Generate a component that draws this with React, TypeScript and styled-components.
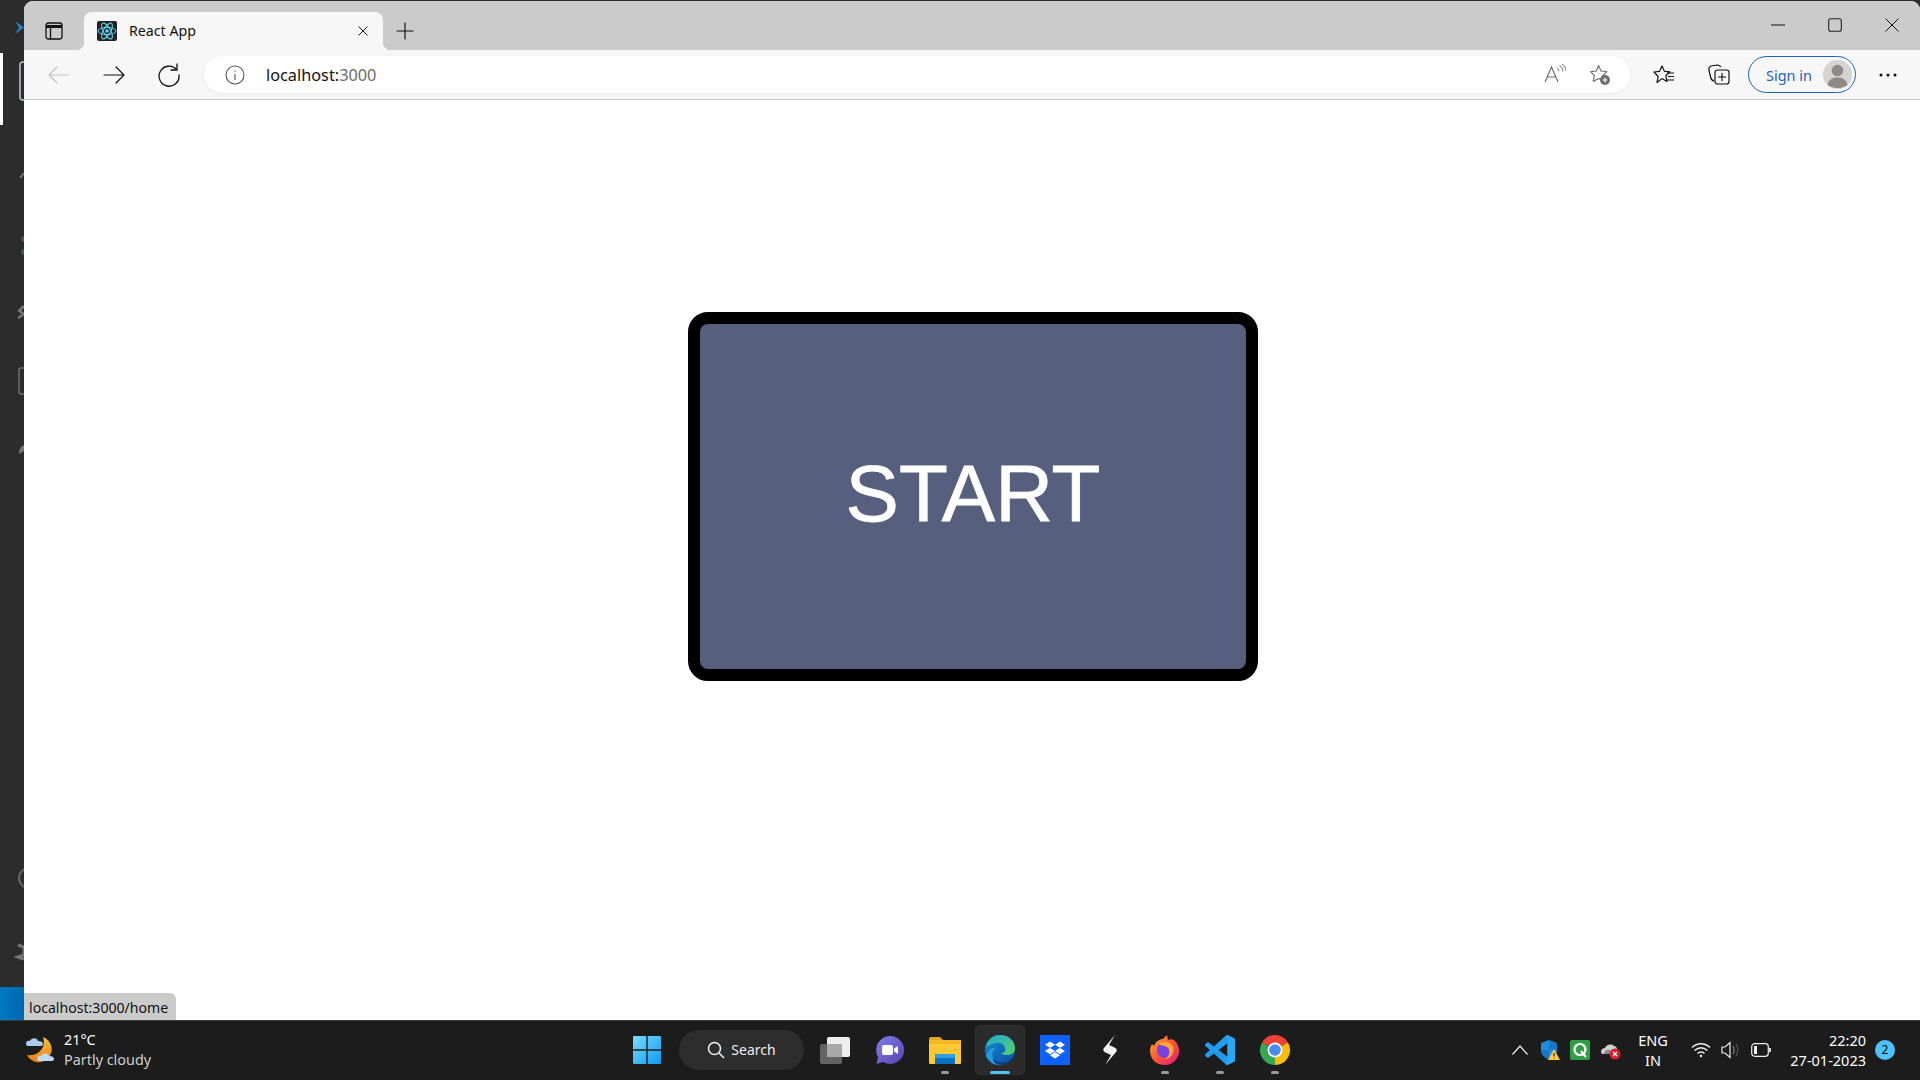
import React, { FC, ReactNode } from 'react'
import styled, { createGlobalStyle } from 'styled-components'
import { FaDropbox } from 'react-icons/fa'

// * ------------------------------------------------------------------------------- style

const GlobalStyle = createGlobalStyle`
  html, body {
    margin: 0;
    padding: 0;
    height: 100%;
    overflow: hidden;
    background: #2c2c2c;
  }
  #root {
    height: 100%;
  }
`

const Screen = styled.div`
  width: 1920px;
  height: 1080px;
  display: flex;
  flex-direction: column;
  position: relative;
  overflow: hidden;
  font-family: 'Noto Sans', 'Open Sans', sans-serif;
`

const Desktop = styled.div`
  height: 1020px;
  display: flex;
`

const ActivityBar = styled.div`
  width: 24px;
  flex: none;
  display: flex;
  flex-direction: column;
  background: #2c2c2c;
`

const ActivitySpace = styled.div`
  flex: 1;
  overflow: hidden;
`

const StatusFoot = styled.div`
  height: 33px;
  background: linear-gradient(90deg, #0078c4, #0068ad);
`

const BrowserWindow = styled.div`
  flex: 1;
  margin-top: 1px;
  display: flex;
  flex-direction: column;
  border-radius: 9px 9px 0 0;
  overflow: hidden;
  background: #fff;
`

const TitleBar = styled.div`
  height: 49px;
  flex: none;
  display: flex;
  align-items: flex-end;
  background: #cbcbcb;
`

const PanelButton = styled.div`
  width: 60px;
  height: 38px;
  display: flex;
  align-items: center;
  justify-content: center;
`

const Tab = styled.div`
  width: 299px;
  height: 38px;
  display: flex;
  align-items: center;
  position: relative;
  box-sizing: border-box;
  padding: 0 10px 0 13px;
  border-radius: 8px 8px 0 0;
  background: #f7f7f7;
  &::before,
  &::after {
    content: '';
    position: absolute;
    bottom: 0;
    width: 8px;
    height: 8px;
  }
  &::before {
    left: -8px;
    background: radial-gradient(circle at 0 0, transparent 8px, #f7f7f7 8.5px);
  }
  &::after {
    right: -8px;
    background: radial-gradient(circle at 100% 0, transparent 8px, #f7f7f7 8.5px);
  }
`

const TabTitle = styled.span`
  flex: 1;
  margin: 0 0 2px 12px;
  font-size: 14.2px;
  color: #111;
`

const NewTab = styled.div`
  width: 44px;
  height: 38px;
  display: flex;
  align-items: center;
  justify-content: center;
`

const WindowControls = styled.div`
  margin-left: auto;
  align-self: stretch;
  display: flex;
`

const WindowButton = styled.div`
  width: 57px;
  height: 48px;
  display: flex;
  align-items: center;
  justify-content: center;
`

const Toolbar = styled.div`
  height: 49px;
  flex: none;
  display: flex;
  align-items: center;
  padding-left: 7px;
  background: #f7f7f7;
  border-bottom: 1px solid #c9c9c9;
`

const ToolButton = styled.div<{ $width?: number }>`
  width: ${(p) => p.$width ?? 55}px;
  height: 37px;
  flex: none;
  display: flex;
  align-items: center;
  justify-content: center;
`

const AddressBar = styled.div`
  flex: 1;
  height: 37px;
  margin: 0 8px 0 8px;
  display: flex;
  align-items: center;
  border-radius: 19px;
  background: #fff;
  box-shadow: 0 1px 3px rgba(0, 0, 0, 0.06);
`

const InfoSlot = styled.div`
  width: 62px;
  display: flex;
  justify-content: center;
`

const UrlHost = styled.span`
  font-size: 16.3px;
  color: #111;
`

const UrlPort = styled.span`
  font-size: 16.3px;
  color: #6b6b6b;
`

const AddressActions = styled.div`
  margin-left: auto;
  display: flex;
  padding-right: 8px;
`

const AddressAction = styled.div`
  width: 45px;
  display: flex;
  justify-content: center;
`

const SignIn = styled.div`
  width: 108px;
  height: 37px;
  flex: none;
  box-sizing: border-box;
  display: flex;
  align-items: center;
  justify-content: space-between;
  padding: 0 3px 0 17px;
  border: 1px solid #1b62c4;
  border-radius: 19px;
  font-size: 14.5px;
  color: #1b62c4;
`

const Content = styled.main`
  flex: 1;
  display: flex;
  justify-content: center;
  align-items: flex-start;
  padding-top: 212px;
  background: #fff;
`

const StartButton = styled.button`
  width: 570px;
  height: 369px;
  margin: 0 0 0 2px;
  padding: 0 0 6px;
  box-sizing: border-box;
  border: 12px solid #000;
  border-radius: 20px;
  background: #565f7d;
  color: #fff;
  font-family: 'Liberation Sans', Arial, sans-serif;
  font-size: 80px;
  -webkit-text-stroke: 0.8px #fff;
  cursor: pointer;
`

const LinkHint = styled.div`
  position: absolute;
  left: 24px;
  bottom: 60px;
  height: 27px;
  box-sizing: border-box;
  padding: 2px 8px 0 5px;
  display: flex;
  align-items: center;
  border-radius: 0 6px 0 0;
  background: #cbcbcb;
  font-size: 14.1px;
  color: #111;
`

const Taskbar = styled.footer`
  height: 60px;
  flex: none;
  box-sizing: border-box;
  border-top: 1px solid #3a3a3a;
  padding-bottom: 2px;
  display: grid;
  grid-template-columns: 619px auto 1fr;
  align-items: center;
  background: #1c1c1c;
  color: #fff;
`

const Weather = styled.div`
  display: flex;
  align-items: center;
  gap: 9px;
  padding-left: 25px;
`

const WeatherText = styled.div`
  display: flex;
  flex-direction: column;
  font-size: 14.4px;
  line-height: 20px;
`

const WeatherSub = styled.span`
  color: #cfcfcf;
`

const TaskIcons = styled.div`
  display: flex;
  align-items: center;
`

const TaskButton = styled.div<{ $active?: boolean }>`
  width: ${(p) => (p.$active ? 50 : 55)}px;
  height: 50px;
  margin: ${(p) => (p.$active ? '0 2.5px' : '0')};
  position: relative;
  display: flex;
  align-items: center;
  justify-content: center;
  box-sizing: border-box;
  border-radius: 5px;
  background: ${(p) => (p.$active ? '#2b2b2b' : 'transparent')};
  border: ${(p) => (p.$active ? '1px solid #333' : 'none')};
`

const RunDot = styled.span<{ $active?: boolean }>`
  position: absolute;
  bottom: ${(p) => (p.$active ? 0 : 1)}px;
  left: 50%;
  width: ${(p) => (p.$active ? 20 : 8)}px;
  height: 3px;
  transform: translateX(-50%);
  border-radius: 2px;
  background: ${(p) => (p.$active ? '#4cc2ff' : '#9a9a9a')};
`

const SearchPill = styled.div`
  width: 125px;
  height: 40px;
  margin: 0 3px 0 5px;
  display: flex;
  align-items: center;
  justify-content: center;
  gap: 6px;
  border-radius: 20px;
  background: #2d2d2d;
  font-size: 14px;
  color: #eee;
`

const Tray = styled.div`
  display: flex;
  align-items: center;
  justify-content: flex-end;
  padding-right: 40px;
`

const TrayIcon = styled.div<{ $width?: number }>`
  width: ${(p) => p.$width ?? 30}px;
  display: flex;
  justify-content: center;
`

const Lang = styled.div`
  width: 56px;
  margin: 0 5px 0 0;
  text-align: center;
  font-size: 14.5px;
  line-height: 20px;
`

const Clock = styled.div`
  width: 90px;
  text-align: right;
  font-size: 14.5px;
  line-height: 20px;
`

const NotifyBadge = styled.div`
  width: 20px;
  height: 20px;
  margin: 0 -15px 0 9px;
  display: flex;
  align-items: center;
  justify-content: center;
  border-radius: 50%;
  background: #4cc2ff;
  font-size: 12px;
  color: #111;
`

// * ------------------------------------------------------------------------------- icons

const Line: FC<{ size?: number; color?: string; width?: number; children: ReactNode }> = ({
  size = 24,
  color = '#111',
  width = 1.4,
  children,
}) => (
  <svg width={size} height={size} viewBox="0 0 24 24" fill="none" stroke={color} strokeWidth={width} strokeLinecap="round" strokeLinejoin="round">
    {children}
  </svg>
)

const ActivityIcons = () => (
  <svg width="24" height="987" viewBox="0 0 24 987" fill="none">
    <path d="M15 21l9 6.500-9 6.500 4-6.500z" fill="#1f86c9" />
    <rect x="0" y="53" width="3" height="72" fill="#fff" />
    <rect x="20" y="62" width="8" height="38" rx="3" stroke="#b9c6cf" strokeWidth="1.500" />
    <path d="M20 178l4-5" stroke="#777" strokeWidth="2" />
    <circle cx="24" cy="239" r="3" fill="#3a5566" />
    <circle cx="24" cy="252" r="3" fill="#3a5566" />
    <path d="M18 310l6 4-6 4M24 306l-4 4" stroke="#777" strokeWidth="2.500" />
    <rect x="19" y="368" width="9" height="26" rx="2" stroke="#6d6d6d" strokeWidth="1.500" />
    <path d="M19 454c0-5 2-8 5-9v6z" fill="#777" />
    <circle cx="29" cy="878" r="10" stroke="#666" strokeWidth="2" />
    <path d="M18 945l6 2v8l-6 2 6 2" stroke="#777" strokeWidth="3" />
  </svg>
)

const ReactFavicon = () => (
  <svg width="20" height="20" viewBox="0 0 20 20" fill="none">
    <rect width="20" height="20" rx="2" fill="#222" />
    <g stroke="#61dafb" strokeWidth="1">
      <ellipse cx="10" cy="10" rx="9" ry="3.500" />
      <ellipse cx="10" cy="10" rx="9" ry="3.500" transform="rotate(60 10 10)" />
      <ellipse cx="10" cy="10" rx="9" ry="3.500" transform="rotate(120 10 10)" />
    </g>
    <circle cx="10" cy="10" r="1.800" fill="#61dafb" />
  </svg>
)

const Avatar = () => (
  <svg width="29" height="29" viewBox="0 0 29 29">
    <circle cx="14.500" cy="14.500" r="14.500" fill="#d5d3d0" />
    <circle cx="14.500" cy="10.500" r="5.800" fill="#8f8a85" />
    <path d="M4.500 25c1.500-6 5.500-7.500 10-7.500s8.500 1.500 10 7.500c-5 4-15 4-20 0z" fill="#8f8a85" />
  </svg>
)

const WeatherIcon = () => (
  <svg width="30" height="30" viewBox="0 0 30 30">
    <defs>
      <linearGradient id="moon" x1="0" y1="0" x2="0" y2="1">
        <stop offset="0" stopColor="#f8c23c" />
        <stop offset="1" stopColor="#ee7d18" />
      </linearGradient>
    </defs>
    <path d="M18 2a13 13 0 1 1-16 18c9 2 20-6 16-18z" fill="url(#moon)" />
    <path d="M1 9c0-3 2-4 4-3 1-3 7-4 8 0 3 0 5 1 5 3 0 1-1 2-2 2H3c-1 0-2-1-2-2z" fill="#a9cdf0" />
    <path d="M12 24c0-3 2-4 4-3 1-3 7-4 8 0 3 0 5 1 5 3 0 1-1 2-2 2H14c-1 0-2-1-2-2z" fill="#bcd9f5" />
  </svg>
)

const WindowsLogo = () => (
  <svg width="30" height="30" viewBox="0 0 30 30">
    <defs>
      <linearGradient id="win" x1="0" y1="0" x2="1" y2="1">
        <stop offset="0" stopColor="#7bdcff" />
        <stop offset="1" stopColor="#0a9bf0" />
      </linearGradient>
    </defs>
    <path d="M1 2a1 1 0 0 1 1-1h12.300v13.300H1zM15.700 1H28a1 1 0 0 1 1 1v12.300H15.700zM1 15.700h13.300V29H2a1 1 0 0 1-1-1zM15.700 15.700H29V28a1 1 0 0 1-1 1H15.700z" fill="url(#win)" />
  </svg>
)

const TaskView = () => (
  <svg width="32" height="30" viewBox="0 0 32 30">
    <rect x="8" y="2" width="23" height="20" rx="2" fill="#eee" />
    <rect x="1" y="9" width="22" height="20" rx="2" fill="#6b6b6b" opacity="0.9" />
    <rect x="8" y="9" width="15" height="13" fill="#a9a9a9" />
  </svg>
)

const TeamsIcon = () => (
  <svg width="30" height="30" viewBox="0 0 30 30">
    <defs>
      <linearGradient id="teams" x1="0" y1="0" x2="1" y2="1">
        <stop offset="0" stopColor="#7b83eb" />
        <stop offset="1" stopColor="#5b3fb0" />
      </linearGradient>
    </defs>
    <path d="M15 1a14 14 0 1 1-7 26L1.500 29 3 22A14 14 0 0 1 15 1z" fill="url(#teams)" />
    <rect x="7" y="10" width="11" height="10" rx="2" fill="#fff" />
    <path d="M19 13.500l4-2.500v8l-4-2.500z" fill="#fff" />
  </svg>
)

const FolderIcon = () => (
  <svg width="32" height="30" viewBox="0 0 32 30">
    <path d="M0 4a2 2 0 0 1 2-2h9l3 3h-14z" fill="#e0a521" />
    <path d="M0 5h32v23a1 1 0 0 1-1 1H1a1 1 0 0 1-1-1z" fill="#fcc934" />
    <path d="M0 5h32v4H0z" fill="#f4b921" />
    <path d="M6 21a2 2 0 0 1 2-2h16a2 2 0 0 1 2 2v8H6z" fill="#0f70c4" />
    <path d="M6 19h20v4H6z" fill="#2aa0e8" />
  </svg>
)

const EdgeIcon = () => (
  <svg width="32" height="32" viewBox="0 0 32 32">
    <defs>
      <linearGradient id="edgeA" x1="0" y1="0" x2="1" y2="1">
        <stop offset="0" stopColor="#1aa7d8" />
        <stop offset="1" stopColor="#5bd36a" />
      </linearGradient>
      <linearGradient id="edgeB" x1="0" y1="0" x2="1" y2="1">
        <stop offset="0" stopColor="#1688d8" />
        <stop offset="1" stopColor="#0c4f9e" />
      </linearGradient>
    </defs>
    <circle cx="16" cy="16" r="15" fill="url(#edgeB)" />
    <path d="M1.500 14C3 6 9 1 16 1c9 0 15 6 15 13 0 5-4 7-8 7-3 0-5-1-6-2 3 0 5-2 4-5-1-4-5-6-9-5-5 1-9 3-11.500 5z" fill="url(#edgeA)" />
    <path d="M13 14c-4 1-6 5-4 10 1 3 5 6 9 7-6 1-13-2-16-9 2-6 6-9 11-8z" fill="#1e9fdc" />
    <path d="M31 20c-2 7-8 11-14 11-5 0-8-3-8-7 2 3 6 5 11 4 5 0 9-4 11-8z" fill="#0b3f86" />
  </svg>
)

const DropboxIcon = () => (
  <svg width="30" height="30" viewBox="0 0 30 30">
    <rect width="30" height="30" fill="#0d61ff" />
    <g transform="translate(5 5)" fill="#fff">
      <FaDropbox size={20} />
    </g>
  </svg>
)

const StylusIcon = () => (
  <svg width="14" height="30" viewBox="0 0 14 30">
    <path d="M12 0L1 13c-1.500 2-.5 3.500 1.500 4.500L8 20 2 30l11-13c1.500-2 .5-3.500-1.500-4.500L6 10z" fill="#f2f2f2" />
  </svg>
)

const FirefoxIcon = () => (
  <svg width="30" height="30" viewBox="0 0 30 30">
    <defs>
      <linearGradient id="fox" x1="0" y1="0" x2="1" y2="1">
        <stop offset="0" stopColor="#ffb22f" />
        <stop offset="0.5" stopColor="#ff5634" />
        <stop offset="1" stopColor="#e31587" />
      </linearGradient>
    </defs>
    <path d="M2 9l2 2c2-5 6-7 9-7l4-4 1 5c4-2 9 0 11 9 1 8-5 16-14 16S0 24 0 15c0-2 1-4 2-6z" fill="url(#fox)" />
    <circle cx="15" cy="15" r="8" fill="#7542e5" />
    <path d="M8 9c4-3 12-3 15 2 2 6-2 13-8 13 5-3 6-9 2-12-3-2-6-1-9-3z" fill="#ffa930" />
  </svg>
)

const VsCodeIcon = () => (
  <svg width="30" height="30" viewBox="0 0 24 24">
    <path
      d="M23.150 2.587L18.210.21a1.494 1.494 0 0 0-1.705.29l-9.460 8.630-4.120-3.128a.999.999 0 0 0-1.276.057L.327 7.261A1 1 0 0 0 .326 8.740L3.899 12 .326 15.260a1 1 0 0 0 .001 1.479L1.650 17.940a.999.999 0 0 0 1.276.057l4.120-3.128 9.460 8.630a1.492 1.492 0 0 0 1.704.29l4.942-2.377A1.500 1.500 0 0 0 24 20.060V3.939a1.500 1.500 0 0 0-.85-1.352zm-5.146 14.861L10.826 12l7.178-5.448v10.896z"
      fill="#1f9cf0"
    />
    <path d="M17 .3l1.200-.1 5 2.400c.5.300.8.800.8 1.300v16.200c0 .500-.3 1-.8 1.300l-5 2.400-1.200-.1 1-6.700V6.600z" fill="#29a8f2" />
  </svg>
)

const ChromeIcon = () => (
  <svg width="32" height="32" viewBox="0 0 32 32">
    <path d="M16 16L3 8.500A15 15 0 0 1 29 8.500z" fill="#ea4335" />
    <path d="M16 16L3 8.500A15 15 0 0 0 16 31z" fill="#34a853" />
    <path d="M16 16L29 8.500A15 15 0 0 1 16 31z" fill="#fbbc04" />
    <circle cx="16" cy="16" r="7.500" fill="#fff" />
    <circle cx="16" cy="16" r="5.800" fill="#4a8af4" />
  </svg>
)

const ShieldIcon = () => (
  <svg width="20" height="22" viewBox="0 0 20 22">
    <path d="M9 1l8 3v7c0 5-4 8-8 10-4-2-8-5-8-10V4z" fill="#1d8fe0" />
    <path d="M9 1l8 3v7H9zM1 11h8v10c-4-2-8-5-8-10z" fill="#0f5fb0" opacity="0.5" />
    <path d="M14 10l6 11H8z" fill="#ffc83d" />
    <path d="M14 14v3.500M14 19v.6" stroke="#222" strokeWidth="1.200" />
  </svg>
)

const QIcon = () => (
  <svg width="20" height="20" viewBox="0 0 20 20">
    <rect width="20" height="20" rx="2" fill="#2ea043" />
    <circle cx="10" cy="9.500" r="5.500" fill="none" stroke="#fff" strokeWidth="2.200" />
    <path d="M11 11l5 6" stroke="#fff" strokeWidth="2.200" />
  </svg>
)

const CloudOff = () => (
  <svg width="21" height="20" viewBox="0 0 21 20">
    <path d="M1 12c0-3 2-4 4-4 1-3 6-5 9-2 2 0 3 2 3 3v5H3c-1 0-2-1-2-2z" fill="#cfcfcf" />
    <path d="M4 14c0-3 3-5 6-4v4z" fill="#8a8a8a" />
    <circle cx="15" cy="14" r="5.500" fill="#d8202c" />
    <path d="M13 12l4 4M17 12l-4 4" stroke="#fff" strokeWidth="1.200" />
  </svg>
)

// * ------------------------------------------------------------------------------- comp

const App: FC = () => {
  return (
    <Screen>
      <GlobalStyle />
      <Desktop>
        <ActivityBar>
          <ActivitySpace>
            <ActivityIcons />
          </ActivitySpace>
          <StatusFoot />
        </ActivityBar>
        <BrowserWindow>
          <TitleBar>
            <PanelButton>
              <svg width="18" height="18" viewBox="0 0 18 18" fill="none" stroke="#111" strokeWidth="1.300">
                <rect x="1" y="1" width="16" height="16" rx="2.500" />
                <path d="M1 4.500h16" strokeWidth="3" />
                <path d="M5.500 5v12" />
              </svg>
            </PanelButton>
            <Tab>
              <ReactFavicon />
              <TabTitle>React App</TabTitle>
              <Line size={20} width={1.2}>
                <path d="M7 7l10 10M17 7L7 17" />
              </Line>
            </Tab>
            <NewTab>
              <Line size={24} width={1.2}>
                <path d="M12 4v16M4 12h16" />
              </Line>
            </NewTab>
            <WindowControls>
              <WindowButton>
                <svg width="14" height="2" viewBox="0 0 14 2">
                  <path d="M0 1h14" stroke="#111" strokeWidth="1" />
                </svg>
              </WindowButton>
              <WindowButton>
                <svg width="14" height="14" viewBox="0 0 14 14" fill="none">
                  <rect x="0.700" y="0.700" width="12.600" height="12.600" rx="2" stroke="#222" strokeWidth="1.100" />
                </svg>
              </WindowButton>
              <WindowButton>
                <svg width="14" height="14" viewBox="0 0 14 14">
                  <path d="M.5.500l13 13M13.500.500l-13 13" stroke="#111" strokeWidth="1" />
                </svg>
              </WindowButton>
            </WindowControls>
          </TitleBar>
          <Toolbar>
            <ToolButton>
              <Line color="#c4c4c4" width={1.2}>
                <path d="M22 12H2M10 4l-8 8 8 8" />
              </Line>
            </ToolButton>
            <ToolButton>
              <Line width={1.2}>
                <path d="M2 12h20M14 4l8 8-8 8" />
              </Line>
            </ToolButton>
            <ToolButton>
              <Line width={1.3}>
                <path d="M19.500 6.500A10 10 0 1 0 22 12" />
                <path d="M20 1v6h-6" />
              </Line>
            </ToolButton>
            <AddressBar>
              <InfoSlot>
                <svg width="20" height="20" viewBox="0 0 20 20" fill="none" stroke="#555" strokeWidth="1.100">
                  <circle cx="10" cy="10" r="9" />
                  <path d="M10 9v6M10 5.500v1.200" />
                </svg>
              </InfoSlot>
              <UrlHost>localhost:</UrlHost>
              <UrlPort>3000</UrlPort>
              <AddressActions>
                <AddressAction>
                  <svg width="22" height="20" viewBox="0 0 22 20" fill="none" stroke="#6a6a6a" strokeWidth="1.100">
                    <path d="M1 18L7.500 3 14 18M3.500 13h8" />
                    <path d="M13 4c1 .5 2 2 2 3M15.500 1.500c2 1 3.500 3.500 3.500 6M18 0c2.500 1.500 4 4 4 7" strokeWidth="1" />
                  </svg>
                </AddressAction>
                <AddressAction>
                  <svg width="22" height="22" viewBox="0 0 22 22" fill="none">
                    <path d="M9.500 1.500l2.500 5.500 6 .7-4.400 4 1.200 5.800-5.300-3-5.300 3 1.200-5.800L1.500 7.700l6-.7z" stroke="#6a6a6a" strokeWidth="1.100" strokeLinejoin="round" />
                    <circle cx="16" cy="16" r="5" fill="#6a6a6a" />
                    <path d="M16 13.500v5M13.500 16h5" stroke="#fff" strokeWidth="1.200" />
                  </svg>
                </AddressAction>
              </AddressActions>
            </AddressBar>
            <ToolButton $width={52}>
              <svg width="22" height="20" viewBox="0 0 22 20" fill="none" stroke="#111" strokeWidth="1.200" strokeLinejoin="round">
                <path d="M9 1l2.400 5.300 5.600.6-4.200 3.900 1.200 5.700L9 13.600 4 17.500l1.200-6L1 7l5.600-.7z" />
                <path d="M14 8h7M15 11.500h6M14 15h7" />
              </svg>
            </ToolButton>
            <ToolButton $width={58}>
              <svg width="22" height="22" viewBox="0 0 22 22" fill="none" stroke="#111" strokeWidth="1.200" strokeLinejoin="round">
                <path d="M6 17c-2-.5-3-2-3.500-4L1 6c-.5-2 0-3 2-4l6-1c2 0 3 .5 4 2" />
                <rect x="7" y="6" width="14" height="14" rx="2.500" />
                <path d="M14 9v8M10 13h8" />
              </svg>
            </ToolButton>
            <SignIn>
              Sign in
              <Avatar />
            </SignIn>
            <ToolButton $width={64}>
              <svg width="18" height="4" viewBox="0 0 18 4" fill="#111">
                <circle cx="2" cy="2" r="1.500" />
                <circle cx="9" cy="2" r="1.500" />
                <circle cx="16" cy="2" r="1.500" />
              </svg>
            </ToolButton>
          </Toolbar>
          <Content>
            <StartButton>START</StartButton>
          </Content>
        </BrowserWindow>
      </Desktop>
      <LinkHint>localhost:3000/home</LinkHint>
      <Taskbar>
        <Weather>
          <WeatherIcon />
          <WeatherText>
            <span>21°C</span>
            <WeatherSub>Partly cloudy</WeatherSub>
          </WeatherText>
        </Weather>
        <TaskIcons>
          <TaskButton>
            <WindowsLogo />
          </TaskButton>
          <SearchPill>
            <svg width="18" height="18" viewBox="0 0 18 18" fill="none" stroke="#eee" strokeWidth="1.600">
              <circle cx="7.500" cy="7.500" r="6" />
              <path d="M12 12l5 5" />
            </svg>
            Search
          </SearchPill>
          <TaskButton>
            <TaskView />
          </TaskButton>
          <TaskButton>
            <TeamsIcon />
          </TaskButton>
          <TaskButton>
            <FolderIcon />
            <RunDot />
          </TaskButton>
          <TaskButton $active>
            <EdgeIcon />
            <RunDot $active />
          </TaskButton>
          <TaskButton>
            <DropboxIcon />
          </TaskButton>
          <TaskButton>
            <StylusIcon />
          </TaskButton>
          <TaskButton>
            <FirefoxIcon />
            <RunDot />
          </TaskButton>
          <TaskButton>
            <VsCodeIcon />
            <RunDot />
          </TaskButton>
          <TaskButton>
            <ChromeIcon />
            <RunDot />
          </TaskButton>
        </TaskIcons>
        <Tray>
          <TrayIcon>
            <svg width="16" height="10" viewBox="0 0 16 10" fill="none" stroke="#eee" strokeWidth="1.200">
              <path d="M.5 9.500L8 1l7.500 8.500" />
            </svg>
          </TrayIcon>
          <TrayIcon>
            <ShieldIcon />
          </TrayIcon>
          <TrayIcon>
            <QIcon />
          </TrayIcon>
          <TrayIcon>
            <CloudOff />
          </TrayIcon>
          <Lang>
            ENG
            <br />
            IN
          </Lang>
          <TrayIcon>
            <svg width="20" height="16" viewBox="0 0 20 16" fill="none" stroke="#eee" strokeWidth="1.500">
              <path d="M1 5.500c5-5 13-5 18 0M3.500 8.500c4-3.500 9-3.500 13 0M6.500 11.500c2-2 5-2 7 0" />
              <circle cx="10" cy="14" r="1.200" fill="#eee" stroke="none" />
            </svg>
          </TrayIcon>
          <TrayIcon>
            <svg width="20" height="18" viewBox="0 0 20 18" fill="none" stroke="#eee" strokeWidth="1.200">
              <path d="M1 6h3l5-4.500v15L4 12H1z" />
              <path d="M12 5c1.500 2 1.500 6 0 8" stroke="#888" />
              <path d="M15 3c2.500 3 2.500 9 0 12" stroke="#555" />
            </svg>
          </TrayIcon>
          <TrayIcon>
            <svg width="20" height="14" viewBox="0 0 20 14" fill="none" stroke="#eee" strokeWidth="1.200">
              <rect x="0.700" y="0.700" width="16.600" height="12.600" rx="3" />
              <rect x="3" y="3" width="3" height="8" fill="#eee" stroke="none" />
              <path d="M19 5v4" strokeWidth="1.800" />
            </svg>
          </TrayIcon>
          <Clock>
            22:20
            <br />
            27-01-2023
          </Clock>
          <NotifyBadge>2</NotifyBadge>
        </Tray>
      </Taskbar>
    </Screen>
  )
}

export default App
